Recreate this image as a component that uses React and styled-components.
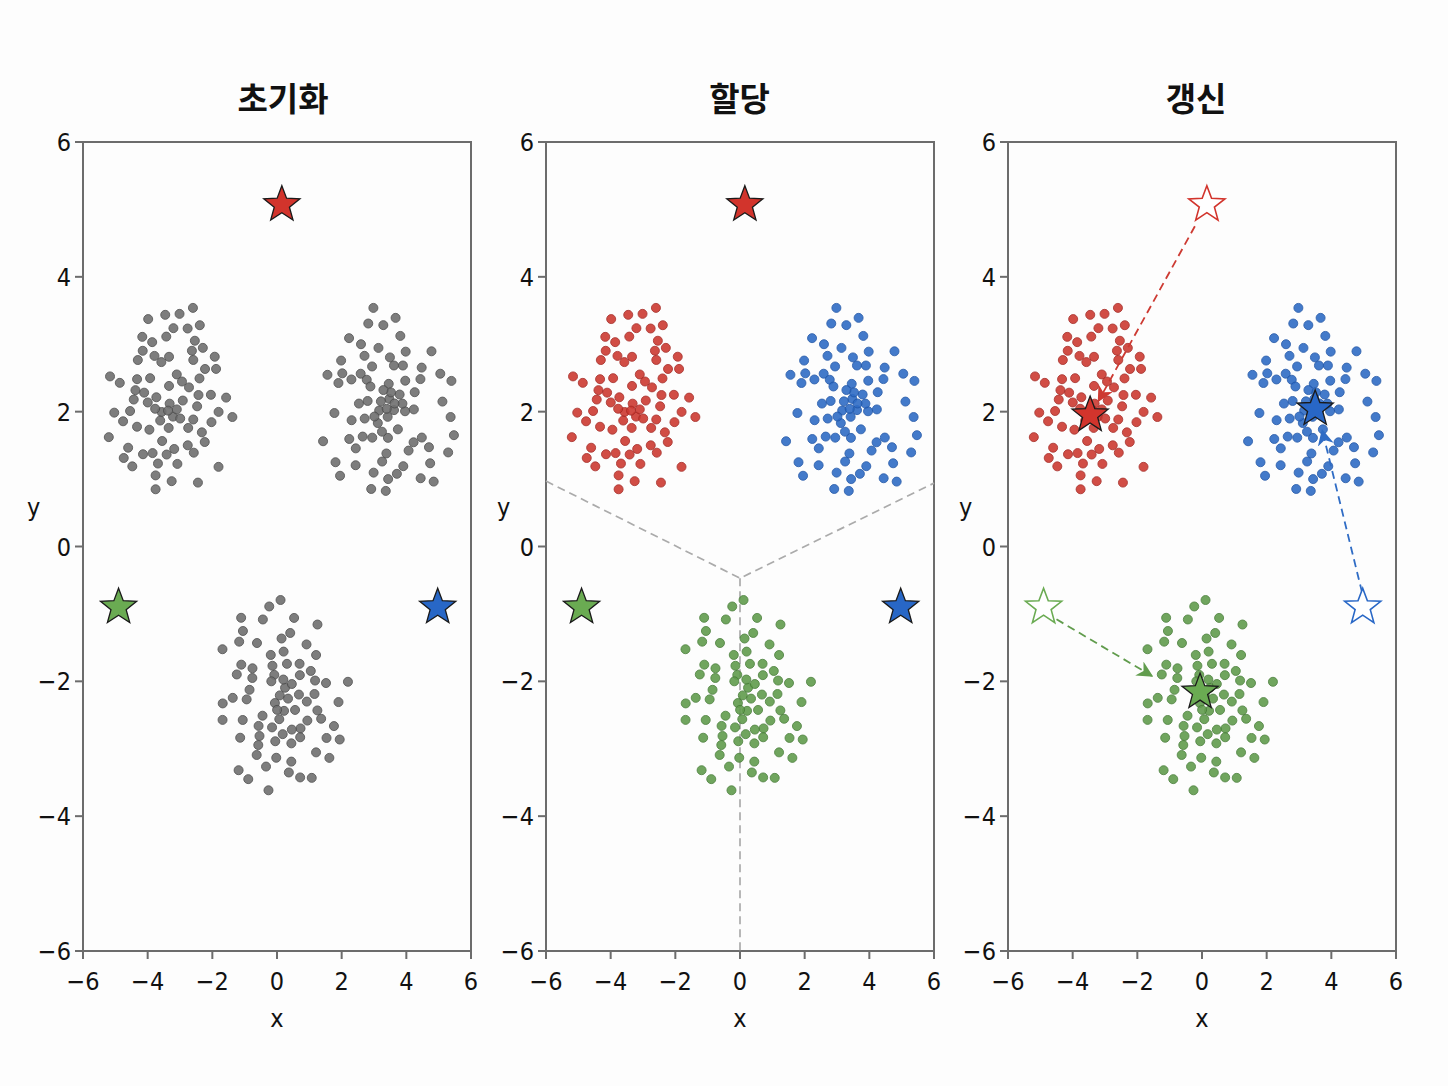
import React from "react";
import styled, { createGlobalStyle } from "styled-components";

const GlobalStyle = createGlobalStyle`
  body {
    margin: 0;
    background: #fdfdfd;
    font-family: "DejaVu Sans Condensed", "Liberation Sans Narrow", "Liberation Sans", sans-serif;
  }
`;

const Figure = styled.div`
  display: flex;
  padding: 77px 0 0 20px;
`;

const Panel = styled.div`
  display: flex;
  flex-direction: column;
  width: 462.5px;
`;

const Title = styled.h2`
  margin: 0 0 12px ${(p) => 63 + p.$shift}px;
  width: 388px;
  height: 41px;
  line-height: 41px;
  text-align: center;
  font-family: "Noto Sans CJK KR", "Noto Sans", sans-serif;
  font-size: 33px;
  font-weight: 700;
  color: #111;
`;

const ChartSvg = styled.svg`
  display: block;
  overflow: visible;
`;

const TickText = styled.text`
  font-family: "DejaVu Sans Condensed", "Liberation Sans Narrow", "Liberation Sans", sans-serif;
  font-size: 25px;
  fill: #111;
`;

// plot geometry
const X0 = 63;
const Y0 = 12;
const W = 388;
const H = 809;
const px = (x) => X0 + ((x + 6) * W) / 12;
const py = (y) => Y0 + ((6 - y) * H) / 12;

const COLORS = {
  gray: { fill: "#707070", edge: "#4a4a4a" },
  red: { fill: "#cd3a32", edge: "#a42620", star: "#d2342c" },
  blue: { fill: "#2f6cc5", edge: "#1d53a6", star: "#2867c6" },
  green: { fill: "#619c4d", edge: "#457c35", star: "#6aab52" },
};

// splitmix32, seeded so the picture is stable
function splitmix32(a) {
  return function () {
    a |= 0;
    a = (a + 0x9e3779b9) | 0;
    let t = a ^ (a >>> 16);
    t = Math.imul(t, 0x21f0aaad);
    t = t ^ (t >>> 15);
    t = Math.imul(t, 0x735a2d97);
    return ((t = t ^ (t >>> 15)) >>> 0) / 4294967296;
  };
}

// round blob, denser in the middle, sparser towards a soft edge
function makeCluster(seed, cx, cy, n) {
  const rnd = splitmix32(seed);
  const pts = [];
  let tries = 0;
  while (pts.length < n && tries < 30000) {
    tries++;
    const r = Math.pow(rnd(), 0.72) * (0.9 + rnd() * 0.22);
    const a = rnd() * Math.PI * 2;
    const x = cx + r * 2.0 * Math.cos(a);
    const y = cy + r * 1.38 * Math.sin(a);
    const minD = 5.5 + r * 6;
    const clash = pts.some(([ox, oy]) => Math.hypot(px(ox) - px(x), py(oy) - py(y)) < minD);
    if (clash) continue;
    pts.push([x, y]);
  }
  return pts;
}

const clusters = [
  { key: "red", pts: makeCluster(918273, -3.3, 2.12, 80) },
  { key: "blue", pts: makeCluster(5550123, 3.45, 2.08, 80) },
  { key: "green", pts: makeCluster(31337, 0.15, -2.22, 80) },
];

const oldStars = [
  { key: "red", x: 0.15, y: 5.07 },
  { key: "green", x: -4.9, y: -0.9 },
  { key: "blue", x: 4.97, y: -0.9 },
];

const newStars = [
  { key: "red", x: -3.46, y: 1.95 },
  { key: "blue", x: 3.5, y: 2.04 },
  { key: "green", x: -0.06, y: -2.16 },
];

const arrows = [
  { key: "red", from: [-0.22, 4.75], to: [-3.2, 2.16] },
  { key: "blue", from: [4.95, -0.68], to: [3.72, 1.72] },
  { key: "green", from: [-4.5, -1.08], to: [-1.55, -1.92] },
];

function starPath(cx, cy, R) {
  const r = R * 0.42;
  let d = "";
  for (let i = 0; i < 10; i++) {
    const rad = i % 2 === 0 ? R : r;
    const a = -Math.PI / 2 + (i * Math.PI) / 5;
    d += `${i === 0 ? "M" : "L"}${(cx + rad * Math.cos(a)).toFixed(2)},${(cy + rad * Math.sin(a)).toFixed(2)}`;
  }
  return d + "Z";
}

function Star({ x, y, color, hollow }) {
  const c = COLORS[color];
  return hollow ? (
    <path d={starPath(px(x), py(y), 19)} fill="#fff" stroke={c.star} strokeWidth="1.6" />
  ) : (
    <path d={starPath(px(x), py(y), 19)} fill={c.star} stroke="#1a1a1a" strokeWidth="1.3" />
  );
}

const ticks = [-6, -4, -2, 0, 2, 4, 6];
const label = (t) => (t < 0 ? `\u2212${-t}` : `${t}`);

function Axes({ yLabelX }) {
  return (
    <g>
      <rect x={X0} y={Y0} width={W} height={H} fill="none" stroke="#6c6c6c" strokeWidth="2" />
      {ticks.map((t) => (
        <g key={"y" + t}>
          <line x1={X0 - 8} x2={X0} y1={py(t)} y2={py(t)} stroke="#6c6c6c" strokeWidth="2" />
          <TickText x={X0 - 12} y={py(t) + 9} textAnchor="end">
            {label(t)}
          </TickText>
        </g>
      ))}
      {ticks.map((t) => (
        <g key={"x" + t}>
          <line x1={px(t)} x2={px(t)} y1={Y0 + H} y2={Y0 + H + 8} stroke="#6c6c6c" strokeWidth="2" />
          <TickText x={px(t)} y={Y0 + H + 39} textAnchor="middle">
            {label(t)}
          </TickText>
        </g>
      ))}
      <TickText x={X0 + W / 2} y={Y0 + H + 76} textAnchor="middle">
        x
      </TickText>
      <TickText x={yLabelX} y={py(0.45)} textAnchor="start">
        y
      </TickText>
    </g>
  );
}

function Points({ colored }) {
  return (
    <g>
      {clusters.map((cl) => {
        const c = COLORS[colored ? cl.key : "gray"];
        return cl.pts.map(([x, y], i) => (
          <circle
            key={cl.key + i}
            cx={px(x)}
            cy={py(y)}
            r="4.5"
            fill={c.fill}
            stroke={c.edge}
            strokeWidth="0.9"
            opacity="0.9"
          />
        ));
      })}
    </g>
  );
}

function Boundaries() {
  const jx = px(0);
  const jy = py(-0.47);
  return (
    <g stroke="#ababab" strokeWidth="1.7" strokeDasharray="8 5" fill="none">
      <path d={`M${px(-6)},${py(0.97)} L${jx},${jy} L${px(6)},${py(0.94)}`} />
      <path d={`M${jx},${jy} L${jx},${py(-6)}`} />
    </g>
  );
}

function Arrows() {
  return (
    <g>
      <defs>
        {arrows.map((a) => (
          <marker
            key={a.key}
            id={"head-" + a.key}
            viewBox="0 0 10 10"
            refX="9"
            refY="5"
            markerWidth="9"
            markerHeight="9"
            orient="auto"
          >
            <path d="M0,0 L10,5 L0,10 L3,5 Z" fill={COLORS[a.key].fill} />
          </marker>
        ))}
      </defs>
      {arrows.map((a) => (
        <line
          key={a.key}
          x1={px(a.from[0])}
          y1={py(a.from[1])}
          x2={px(a.to[0])}
          y2={py(a.to[1])}
          stroke={COLORS[a.key].fill}
          strokeWidth="1.8"
          strokeDasharray="8 5"
          markerEnd={`url(#head-${a.key})`}
        />
      ))}
    </g>
  );
}

function Chart({ step }) {
  return (
    <ChartSvg width="462.5" height="910" viewBox="0 0 462.5 910">
      <Axes yLabelX={step === 0 ? 7 : 14} />
      {step === 1 && <Boundaries />}
      <Points colored={step > 0} />
      {step === 2 && <Arrows />}
      {oldStars.map((s) => (
        <Star key={"o" + s.key} x={s.x} y={s.y} color={s.key} hollow={step === 2} />
      ))}
      {step === 2 && newStars.map((s) => <Star key={"n" + s.key} x={s.x} y={s.y} color={s.key} />)}
    </ChartSvg>
  );
}

const steps = [
  { title: "초기화", shift: 6 },
  { title: "할당", shift: 0 },
  { title: "갱신", shift: -6 },
];

export default function App() {
  return (
    <>
      <GlobalStyle />
      <Figure>
        {steps.map((s, i) => (
          <Panel key={s.title}>
            <Title $shift={s.shift}>{s.title}</Title>
            <Chart step={i} />
          </Panel>
        ))}
      </Figure>
    </>
  );
}
